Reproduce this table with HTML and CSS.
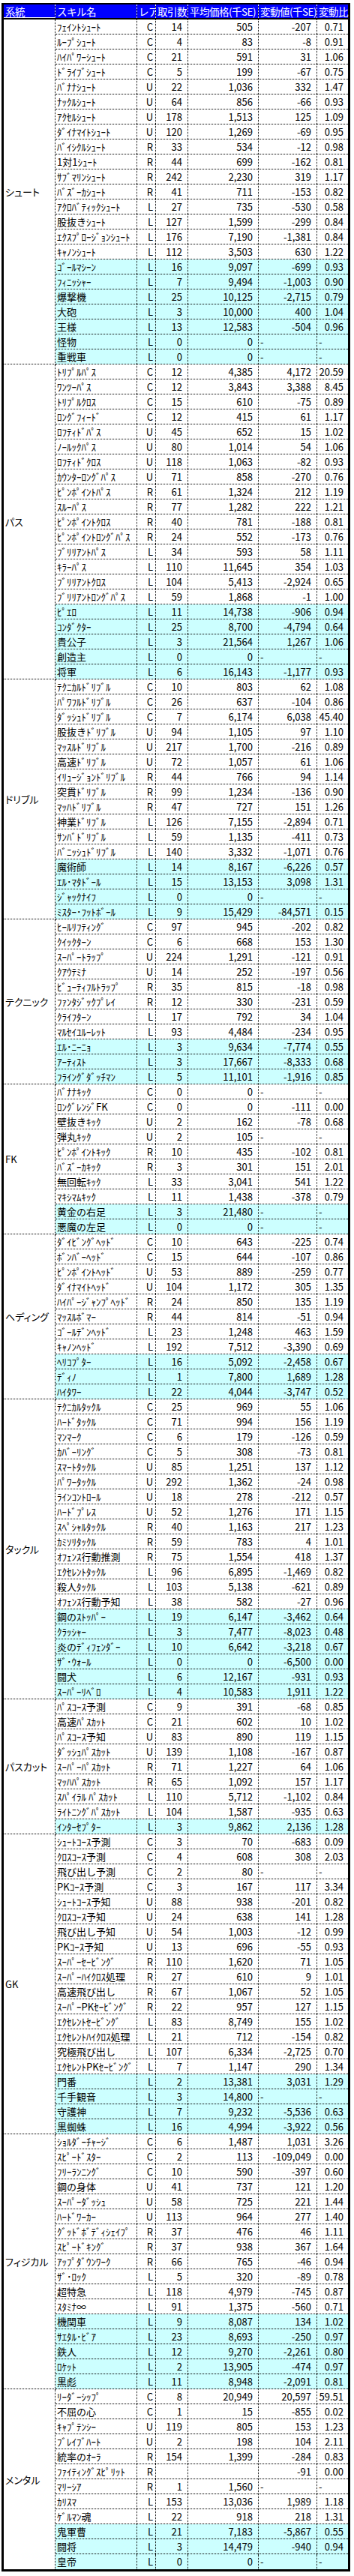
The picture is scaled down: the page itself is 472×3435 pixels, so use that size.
FILE: index.html
```html
<!DOCTYPE html>
<html lang="ja">
<head>
<meta charset="utf-8">
<title>スキル取引相場</title>
<link rel="stylesheet" href="styles.css">
</head>
<body>
<div class="sheet">
  <div class="hdr">
    <div class="sys-h">系統</div>
    <div>スキル名</div>
    <div>レア</div>
    <div>取引数</div>
    <div>平均価格(千SE)</div>
    <div>変動値(千SE)</div>
    <div>変動比</div>
  </div>

  <section class="g">
    <div class="sys">シュート</div>
    <div class="rows">
      <div class="r"><span>ﾌｪｲﾝﾄｼｭｰﾄ</span><span>C</span><span>14</span><span>505</span><span>-207</span><span>0.71</span></div>
      <div class="r"><span>ﾙｰﾌﾟｼｭｰﾄ</span><span>C</span><span>4</span><span>83</span><span>-8</span><span>0.91</span></div>
      <div class="r"><span>ﾊｲﾊﾟﾜｰｼｭｰﾄ</span><span>C</span><span>21</span><span>591</span><span>31</span><span>1.06</span></div>
      <div class="r"><span>ﾄﾞﾗｲﾌﾞｼｭｰﾄ</span><span>C</span><span>5</span><span>199</span><span>-67</span><span>0.75</span></div>
      <div class="r"><span>ﾊﾞﾅﾅｼｭｰﾄ</span><span>U</span><span>22</span><span>1,036</span><span>332</span><span>1.47</span></div>
      <div class="r"><span>ﾅｯｸﾙｼｭｰﾄ</span><span>U</span><span>64</span><span>856</span><span>-66</span><span>0.93</span></div>
      <div class="r"><span>ｱｸｾﾙｼｭｰﾄ</span><span>U</span><span>178</span><span>1,513</span><span>125</span><span>1.09</span></div>
      <div class="r"><span>ﾀﾞｲﾅﾏｲﾄｼｭｰﾄ</span><span>U</span><span>120</span><span>1,269</span><span>-69</span><span>0.95</span></div>
      <div class="r"><span>ﾊﾞｲｼｸﾙｼｭｰﾄ</span><span>R</span><span>33</span><span>534</span><span>-12</span><span>0.98</span></div>
      <div class="r"><span>1対1ｼｭｰﾄ</span><span>R</span><span>44</span><span>699</span><span>-162</span><span>0.81</span></div>
      <div class="r"><span>ｻﾌﾞﾏﾘﾝｼｭｰﾄ</span><span>R</span><span>242</span><span>2,230</span><span>319</span><span>1.17</span></div>
      <div class="r"><span>ﾊﾞｽﾞｰｶｼｭｰﾄ</span><span>R</span><span>41</span><span>711</span><span>-153</span><span>0.82</span></div>
      <div class="r"><span>ｱｸﾛﾊﾞﾃｨｯｸｼｭｰﾄ</span><span>L</span><span>27</span><span>735</span><span>-530</span><span>0.58</span></div>
      <div class="r"><span>股抜きｼｭｰﾄ</span><span>L</span><span>127</span><span>1,599</span><span>-299</span><span>0.84</span></div>
      <div class="r"><span>ｴｸｽﾌﾟﾛｰｼﾞｮﾝｼｭｰﾄ</span><span>L</span><span>176</span><span>7,190</span><span>-1,381</span><span>0.84</span></div>
      <div class="r"><span>ｷｬﾉﾝｼｭｰﾄ</span><span>L</span><span>112</span><span>3,503</span><span>630</span><span>1.22</span></div>
      <div class="r h"><span>ｺﾞｰﾙﾏｼｰﾝ</span><span>L</span><span>16</span><span>9,097</span><span>-699</span><span>0.93</span></div>
      <div class="r h"><span>ﾌｨﾆｯｼｬｰ</span><span>L</span><span>7</span><span>9,494</span><span>-1,003</span><span>0.90</span></div>
      <div class="r h"><span>爆撃機</span><span>L</span><span>25</span><span>10,125</span><span>-2,715</span><span>0.79</span></div>
      <div class="r h"><span>大砲</span><span>L</span><span>3</span><span>10,000</span><span>400</span><span>1.04</span></div>
      <div class="r h"><span>王様</span><span>L</span><span>13</span><span>12,583</span><span>-504</span><span>0.96</span></div>
      <div class="r h"><span>怪物</span><span>L</span><span>0</span><span>0</span><span class="d">-</span><span class="d">-</span></div>
      <div class="r h"><span>重戦車</span><span>L</span><span>0</span><span>0</span><span class="d">-</span><span class="d">-</span></div>
    </div>
  </section>

  <section class="g">
    <div class="sys">パス</div>
    <div class="rows">
      <div class="r"><span>ﾄﾘﾌﾟﾙﾊﾟｽ</span><span>C</span><span>12</span><span>4,385</span><span>4,172</span><span>20.59</span></div>
      <div class="r"><span>ﾜﾝﾂｰﾊﾟｽ</span><span>C</span><span>12</span><span>3,843</span><span>3,388</span><span>8.45</span></div>
      <div class="r"><span>ﾄﾘﾌﾟﾙｸﾛｽ</span><span>C</span><span>15</span><span>610</span><span>-75</span><span>0.89</span></div>
      <div class="r"><span>ﾛﾝｸﾞﾌｨｰﾄﾞ</span><span>C</span><span>12</span><span>415</span><span>61</span><span>1.17</span></div>
      <div class="r"><span>ﾛﾌﾃｨﾄﾞﾊﾟｽ</span><span>U</span><span>45</span><span>652</span><span>15</span><span>1.02</span></div>
      <div class="r"><span>ﾉｰﾙｯｸﾊﾟｽ</span><span>U</span><span>80</span><span>1,014</span><span>54</span><span>1.06</span></div>
      <div class="r"><span>ﾛﾌﾃｨﾄﾞｸﾛｽ</span><span>U</span><span>118</span><span>1,063</span><span>-82</span><span>0.93</span></div>
      <div class="r"><span>ｶｳﾝﾀｰﾛﾝｸﾞﾊﾟｽ</span><span>U</span><span>71</span><span>858</span><span>-270</span><span>0.76</span></div>
      <div class="r"><span>ﾋﾟﾝﾎﾟｲﾝﾄﾊﾟｽ</span><span>R</span><span>61</span><span>1,324</span><span>212</span><span>1.19</span></div>
      <div class="r"><span>ｽﾙｰﾊﾟｽ</span><span>R</span><span>77</span><span>1,282</span><span>222</span><span>1.21</span></div>
      <div class="r"><span>ﾋﾟﾝﾎﾟｲﾝﾄｸﾛｽ</span><span>R</span><span>40</span><span>781</span><span>-188</span><span>0.81</span></div>
      <div class="r"><span>ﾋﾟﾝﾎﾟｲﾝﾄﾛﾝｸﾞﾊﾟｽ</span><span>R</span><span>24</span><span>552</span><span>-173</span><span>0.76</span></div>
      <div class="r"><span>ﾌﾞﾘﾘｱﾝﾄﾊﾟｽ</span><span>L</span><span>34</span><span>593</span><span>58</span><span>1.11</span></div>
      <div class="r"><span>ｷﾗｰﾊﾟｽ</span><span>L</span><span>110</span><span>11,645</span><span>354</span><span>1.03</span></div>
      <div class="r"><span>ﾌﾞﾘﾘｱﾝﾄｸﾛｽ</span><span>L</span><span>104</span><span>5,413</span><span>-2,924</span><span>0.65</span></div>
      <div class="r"><span>ﾌﾞﾘﾘｱﾝﾄﾛﾝｸﾞﾊﾟｽ</span><span>L</span><span>59</span><span>1,868</span><span>-1</span><span>1.00</span></div>
      <div class="r h"><span>ﾋﾟｴﾛ</span><span>L</span><span>11</span><span>14,738</span><span>-906</span><span>0.94</span></div>
      <div class="r h"><span>ｺﾝﾀﾞｸﾀｰ</span><span>L</span><span>25</span><span>8,700</span><span>-4,794</span><span>0.64</span></div>
      <div class="r h"><span>貴公子</span><span>L</span><span>3</span><span>21,564</span><span>1,267</span><span>1.06</span></div>
      <div class="r h"><span>創造主</span><span>L</span><span>0</span><span>0</span><span class="d">-</span><span class="d">-</span></div>
      <div class="r h"><span>将軍</span><span>L</span><span>6</span><span>16,143</span><span>-1,177</span><span>0.93</span></div>
    </div>
  </section>

  <section class="g">
    <div class="sys">ドリブル</div>
    <div class="rows">
      <div class="r"><span>ﾃｸﾆｶﾙﾄﾞﾘﾌﾞﾙ</span><span>C</span><span>10</span><span>803</span><span>62</span><span>1.08</span></div>
      <div class="r"><span>ﾊﾟﾜﾌﾙﾄﾞﾘﾌﾞﾙ</span><span>C</span><span>26</span><span>637</span><span>-104</span><span>0.86</span></div>
      <div class="r"><span>ﾀﾞｯｼｭﾄﾞﾘﾌﾞﾙ</span><span>C</span><span>7</span><span>6,174</span><span>6,038</span><span>45.40</span></div>
      <div class="r"><span>股抜きﾄﾞﾘﾌﾞﾙ</span><span>U</span><span>94</span><span>1,105</span><span>97</span><span>1.10</span></div>
      <div class="r"><span>ﾏｯｽﾙﾄﾞﾘﾌﾞﾙ</span><span>U</span><span>217</span><span>1,700</span><span>-216</span><span>0.89</span></div>
      <div class="r"><span>高速ﾄﾞﾘﾌﾞﾙ</span><span>U</span><span>72</span><span>1,057</span><span>61</span><span>1.06</span></div>
      <div class="r"><span>ｲﾘｭｰｼﾞｮﾝﾄﾞﾘﾌﾞﾙ</span><span>R</span><span>44</span><span>766</span><span>94</span><span>1.14</span></div>
      <div class="r"><span>突貫ﾄﾞﾘﾌﾞﾙ</span><span>R</span><span>99</span><span>1,234</span><span>-136</span><span>0.90</span></div>
      <div class="r"><span>ﾏｯﾊﾄﾞﾘﾌﾞﾙ</span><span>R</span><span>47</span><span>727</span><span>151</span><span>1.26</span></div>
      <div class="r"><span>神業ﾄﾞﾘﾌﾞﾙ</span><span>L</span><span>126</span><span>7,155</span><span>-2,894</span><span>0.71</span></div>
      <div class="r"><span>ｻﾝﾊﾞﾄﾞﾘﾌﾞﾙ</span><span>L</span><span>59</span><span>1,135</span><span>-411</span><span>0.73</span></div>
      <div class="r"><span>ﾊﾞﾆｯｼｭﾄﾞﾘﾌﾞﾙ</span><span>L</span><span>140</span><span>3,332</span><span>-1,071</span><span>0.76</span></div>
      <div class="r h"><span>魔術師</span><span>L</span><span>14</span><span>8,167</span><span>-6,226</span><span>0.57</span></div>
      <div class="r h"><span>ｴﾙ･ﾏﾀﾄﾞｰﾙ</span><span>L</span><span>15</span><span>13,153</span><span>3,098</span><span>1.31</span></div>
      <div class="r h"><span>ｼﾞｬｯｸﾅｲﾌ</span><span>L</span><span>0</span><span>0</span><span class="d">-</span><span class="d">-</span></div>
      <div class="r h"><span>ﾐｽﾀｰ･ﾌｯﾄﾎﾞｰﾙ</span><span>L</span><span>9</span><span>15,429</span><span>-84,571</span><span>0.15</span></div>
    </div>
  </section>

  <section class="g">
    <div class="sys">テクニック</div>
    <div class="rows">
      <div class="r"><span>ﾋｰﾙﾘﾌﾃｨﾝｸﾞ</span><span>C</span><span>97</span><span>945</span><span>-202</span><span>0.82</span></div>
      <div class="r"><span>ｸｲｯｸﾀｰﾝ</span><span>C</span><span>6</span><span>668</span><span>153</span><span>1.30</span></div>
      <div class="r"><span>ｽｰﾊﾟｰﾄﾗｯﾌﾟ</span><span>U</span><span>224</span><span>1,291</span><span>-121</span><span>0.91</span></div>
      <div class="r"><span>ｸｱｳﾃﾐﾅ</span><span>U</span><span>14</span><span>252</span><span>-197</span><span>0.56</span></div>
      <div class="r"><span>ﾋﾞｭｰﾃｨﾌﾙﾄﾗｯﾌﾟ</span><span>R</span><span>35</span><span>815</span><span>-18</span><span>0.98</span></div>
      <div class="r"><span>ﾌｧﾝﾀｼﾞｯｸﾌﾟﾚｲ</span><span>R</span><span>12</span><span>330</span><span>-231</span><span>0.59</span></div>
      <div class="r"><span>ｸﾗｲﾌﾀｰﾝ</span><span>L</span><span>17</span><span>792</span><span>34</span><span>1.04</span></div>
      <div class="r"><span>ﾏﾙｾｲﾕﾙｰﾚｯﾄ</span><span>L</span><span>93</span><span>4,484</span><span>-234</span><span>0.95</span></div>
      <div class="r h"><span>ｴﾙ･ﾆｰﾆｮ</span><span>L</span><span>3</span><span>9,634</span><span>-7,774</span><span>0.55</span></div>
      <div class="r h"><span>ｱｰﾃｨｽﾄ</span><span>L</span><span>3</span><span>17,667</span><span>-8,333</span><span>0.68</span></div>
      <div class="r h"><span>ﾌﾗｲﾝｸﾞﾀﾞｯﾁﾏﾝ</span><span>L</span><span>5</span><span>11,101</span><span>-1,916</span><span>0.85</span></div>
    </div>
  </section>

  <section class="g">
    <div class="sys">FK</div>
    <div class="rows">
      <div class="r"><span>ﾊﾞﾅﾅｷｯｸ</span><span>C</span><span>0</span><span>0</span><span class="d">-</span><span class="d">-</span></div>
      <div class="r"><span>ﾛﾝｸﾞﾚﾝｼﾞFK</span><span>C</span><span>0</span><span>0</span><span>-111</span><span>0.00</span></div>
      <div class="r"><span>壁抜きｷｯｸ</span><span>U</span><span>2</span><span>162</span><span>-78</span><span>0.68</span></div>
      <div class="r"><span>弾丸ｷｯｸ</span><span>U</span><span>2</span><span>105</span><span class="d">-</span><span class="d">-</span></div>
      <div class="r"><span>ﾋﾟﾝﾎﾟｲﾝﾄｷｯｸ</span><span>R</span><span>10</span><span>435</span><span>-102</span><span>0.81</span></div>
      <div class="r"><span>ﾊﾞｽﾞｰｶｷｯｸ</span><span>R</span><span>3</span><span>301</span><span>151</span><span>2.01</span></div>
      <div class="r"><span>無回転ｷｯｸ</span><span>L</span><span>33</span><span>3,041</span><span>541</span><span>1.22</span></div>
      <div class="r"><span>ﾏｷｼﾏﾑｷｯｸ</span><span>L</span><span>11</span><span>1,438</span><span>-378</span><span>0.79</span></div>
      <div class="r h"><span>黄金の右足</span><span>L</span><span>3</span><span>21,480</span><span class="d">-</span><span class="d">-</span></div>
      <div class="r h"><span>悪魔の左足</span><span>L</span><span>0</span><span>0</span><span class="d">-</span><span class="d">-</span></div>
    </div>
  </section>

  <section class="g">
    <div class="sys">ヘディング</div>
    <div class="rows">
      <div class="r"><span>ﾀﾞｲﾋﾞﾝｸﾞﾍｯﾄﾞ</span><span>C</span><span>10</span><span>643</span><span>-225</span><span>0.74</span></div>
      <div class="r"><span>ﾎﾞﾝﾊﾞｰﾍｯﾄﾞ</span><span>C</span><span>15</span><span>644</span><span>-107</span><span>0.86</span></div>
      <div class="r"><span>ﾋﾟﾝﾎﾟｲﾝﾄﾍｯﾄﾞ</span><span>U</span><span>53</span><span>889</span><span>-259</span><span>0.77</span></div>
      <div class="r"><span>ﾀﾞｲﾅﾏｲﾄﾍｯﾄﾞ</span><span>U</span><span>104</span><span>1,172</span><span>305</span><span>1.35</span></div>
      <div class="r"><span>ﾊｲﾊﾟｰｼﾞｬﾝﾌﾟﾍｯﾄﾞ</span><span>R</span><span>24</span><span>850</span><span>135</span><span>1.19</span></div>
      <div class="r"><span>ﾏｯｽﾙﾎﾞﾏｰ</span><span>R</span><span>44</span><span>814</span><span>-51</span><span>0.94</span></div>
      <div class="r"><span>ｺﾞｰﾙﾃﾞﾝﾍｯﾄﾞ</span><span>L</span><span>23</span><span>1,248</span><span>463</span><span>1.59</span></div>
      <div class="r"><span>ｷｬﾉﾝﾍｯﾄﾞ</span><span>L</span><span>192</span><span>7,512</span><span>-3,390</span><span>0.69</span></div>
      <div class="r h"><span>ﾍﾘｺﾌﾟﾀｰ</span><span>L</span><span>16</span><span>5,092</span><span>-2,458</span><span>0.67</span></div>
      <div class="r h"><span>ﾃﾞｨﾉ</span><span>L</span><span>1</span><span>7,800</span><span>1,689</span><span>1.28</span></div>
      <div class="r h"><span>ﾊｲﾀﾜｰ</span><span>L</span><span>22</span><span>4,044</span><span>-3,747</span><span>0.52</span></div>
    </div>
  </section>

  <section class="g">
    <div class="sys">タックル</div>
    <div class="rows">
      <div class="r"><span>ﾃｸﾆｶﾙﾀｯｸﾙ</span><span>C</span><span>25</span><span>969</span><span>55</span><span>1.06</span></div>
      <div class="r"><span>ﾊｰﾄﾞﾀｯｸﾙ</span><span>C</span><span>71</span><span>994</span><span>156</span><span>1.19</span></div>
      <div class="r"><span>ﾏﾝﾏｰｸ</span><span>C</span><span>6</span><span>179</span><span>-126</span><span>0.59</span></div>
      <div class="r"><span>ｶﾊﾞｰﾘﾝｸﾞ</span><span>C</span><span>5</span><span>308</span><span>-73</span><span>0.81</span></div>
      <div class="r"><span>ｽﾏｰﾄﾀｯｸﾙ</span><span>U</span><span>85</span><span>1,251</span><span>137</span><span>1.12</span></div>
      <div class="r"><span>ﾊﾟﾜｰﾀｯｸﾙ</span><span>U</span><span>292</span><span>1,362</span><span>-24</span><span>0.98</span></div>
      <div class="r"><span>ﾗｲﾝｺﾝﾄﾛｰﾙ</span><span>U</span><span>18</span><span>278</span><span>-212</span><span>0.57</span></div>
      <div class="r"><span>ﾊｰﾄﾞﾌﾟﾚｽ</span><span>U</span><span>52</span><span>1,276</span><span>171</span><span>1.15</span></div>
      <div class="r"><span>ｽﾍﾟｼｬﾙﾀｯｸﾙ</span><span>R</span><span>40</span><span>1,163</span><span>217</span><span>1.23</span></div>
      <div class="r"><span>ｶﾐｿﾘﾀｯｸﾙ</span><span>R</span><span>59</span><span>783</span><span>4</span><span>1.01</span></div>
      <div class="r"><span>ｵﾌｪﾝｽ行動推測</span><span>R</span><span>75</span><span>1,554</span><span>418</span><span>1.37</span></div>
      <div class="r"><span>ｴｸｾﾚﾝﾄﾀｯｸﾙ</span><span>L</span><span>96</span><span>6,895</span><span>-1,469</span><span>0.82</span></div>
      <div class="r"><span>殺人ﾀｯｸﾙ</span><span>L</span><span>103</span><span>5,138</span><span>-621</span><span>0.89</span></div>
      <div class="r"><span>ｵﾌｪﾝｽ行動予知</span><span>L</span><span>38</span><span>582</span><span>-27</span><span>0.96</span></div>
      <div class="r h"><span>鋼のｽﾄｯﾊﾟｰ</span><span>L</span><span>19</span><span>6,147</span><span>-3,462</span><span>0.64</span></div>
      <div class="r h"><span>ｸﾗｯｼｬｰ</span><span>L</span><span>3</span><span>7,477</span><span>-8,023</span><span>0.48</span></div>
      <div class="r h"><span>炎のﾃﾞｨﾌｪﾝﾀﾞｰ</span><span>L</span><span>10</span><span>6,642</span><span>-3,218</span><span>0.67</span></div>
      <div class="r h"><span>ｻﾞ･ｳｫｰﾙ</span><span>L</span><span>0</span><span>0</span><span>-6,500</span><span>0.00</span></div>
      <div class="r h"><span>闘犬</span><span>L</span><span>6</span><span>12,167</span><span>-931</span><span>0.93</span></div>
      <div class="r h"><span>ｽｰﾊﾟｰﾘﾍﾞﾛ</span><span>L</span><span>4</span><span>10,583</span><span>1,911</span><span>1.22</span></div>
    </div>
  </section>

  <section class="g">
    <div class="sys">パスカット</div>
    <div class="rows">
      <div class="r"><span>ﾊﾟｽｺｰｽ予測</span><span>C</span><span>9</span><span>391</span><span>-68</span><span>0.85</span></div>
      <div class="r"><span>高速ﾊﾟｽｶｯﾄ</span><span>C</span><span>21</span><span>602</span><span>10</span><span>1.02</span></div>
      <div class="r"><span>ﾊﾟｽｺｰｽ予知</span><span>U</span><span>83</span><span>890</span><span>119</span><span>1.15</span></div>
      <div class="r"><span>ﾀﾞｯｼｭﾊﾟｽｶｯﾄ</span><span>U</span><span>139</span><span>1,108</span><span>-167</span><span>0.87</span></div>
      <div class="r"><span>ｽｰﾊﾟｰﾊﾟｽｶｯﾄ</span><span>R</span><span>71</span><span>1,227</span><span>64</span><span>1.06</span></div>
      <div class="r"><span>ﾏｯﾊﾊﾟｽｶｯﾄ</span><span>R</span><span>65</span><span>1,092</span><span>157</span><span>1.17</span></div>
      <div class="r"><span>ｽﾊﾟｲﾗﾙ ﾊﾟｽｶｯﾄ</span><span>L</span><span>110</span><span>5,712</span><span>-1,102</span><span>0.84</span></div>
      <div class="r"><span>ﾗｲﾄﾆﾝｸﾞﾊﾟｽｶｯﾄ</span><span>L</span><span>104</span><span>1,587</span><span>-935</span><span>0.63</span></div>
      <div class="r h"><span>ｲﾝﾀｰｾﾌﾟﾀｰ</span><span>L</span><span>3</span><span>9,862</span><span>2,136</span><span>1.28</span></div>
    </div>
  </section>

  <section class="g">
    <div class="sys">GK</div>
    <div class="rows">
      <div class="r"><span>ｼｭｰﾄｺｰｽ予測</span><span>C</span><span>3</span><span>70</span><span>-683</span><span>0.09</span></div>
      <div class="r"><span>ｸﾛｽｺｰｽ予測</span><span>C</span><span>4</span><span>608</span><span>308</span><span>2.03</span></div>
      <div class="r"><span>飛び出し予測</span><span>C</span><span>2</span><span>80</span><span class="d">-</span><span class="d">-</span></div>
      <div class="r"><span>PKｺｰｽ予測</span><span>C</span><span>3</span><span>167</span><span>117</span><span>3.34</span></div>
      <div class="r"><span>ｼｭｰﾄｺｰｽ予知</span><span>U</span><span>88</span><span>938</span><span>-201</span><span>0.82</span></div>
      <div class="r"><span>ｸﾛｽｺｰｽ予知</span><span>U</span><span>24</span><span>638</span><span>141</span><span>1.28</span></div>
      <div class="r"><span>飛び出し予知</span><span>U</span><span>54</span><span>1,003</span><span>-12</span><span>0.99</span></div>
      <div class="r"><span>PKｺｰｽ予知</span><span>U</span><span>13</span><span>696</span><span>-55</span><span>0.93</span></div>
      <div class="r"><span>ｽｰﾊﾟｰｾｰﾋﾞﾝｸﾞ</span><span>R</span><span>110</span><span>1,620</span><span>71</span><span>1.05</span></div>
      <div class="r"><span>ｽｰﾊﾟｰﾊｲｸﾛｽ処理</span><span>R</span><span>27</span><span>610</span><span>9</span><span>1.01</span></div>
      <div class="r"><span>高速飛び出し</span><span>R</span><span>67</span><span>1,067</span><span>52</span><span>1.05</span></div>
      <div class="r"><span>ｽｰﾊﾟｰPKｾｰﾋﾞﾝｸﾞ</span><span>R</span><span>22</span><span>957</span><span>127</span><span>1.15</span></div>
      <div class="r"><span>ｴｸｾﾚﾝﾄｾｰﾋﾞﾝｸﾞ</span><span>L</span><span>83</span><span>8,749</span><span>155</span><span>1.02</span></div>
      <div class="r"><span>ｴｸｾﾚﾝﾄﾊｲｸﾛｽ処理</span><span>L</span><span>21</span><span>712</span><span>-154</span><span>0.82</span></div>
      <div class="r"><span>究極飛び出し</span><span>L</span><span>107</span><span>6,334</span><span>-2,725</span><span>0.70</span></div>
      <div class="r"><span>ｴｸｾﾚﾝﾄPKｾｰﾋﾞﾝｸﾞ</span><span>L</span><span>7</span><span>1,147</span><span>290</span><span>1.34</span></div>
      <div class="r h"><span>門番</span><span>L</span><span>2</span><span>13,381</span><span>3,031</span><span>1.29</span></div>
      <div class="r h"><span>千手観音</span><span>L</span><span>3</span><span>14,800</span><span class="d">-</span><span class="d">-</span></div>
      <div class="r h"><span>守護神</span><span>L</span><span>7</span><span>9,232</span><span>-5,536</span><span>0.63</span></div>
      <div class="r h"><span>黒蜘蛛</span><span>L</span><span>16</span><span>4,994</span><span>-3,922</span><span>0.56</span></div>
    </div>
  </section>

  <section class="g">
    <div class="sys">フィジカル</div>
    <div class="rows">
      <div class="r"><span>ｼｮﾙﾀﾞｰﾁｬｰｼﾞ</span><span>C</span><span>6</span><span>1,487</span><span>1,031</span><span>3.26</span></div>
      <div class="r"><span>ｽﾋﾟｰﾄﾞｽﾀｰ</span><span>C</span><span>2</span><span>113</span><span>-109,049</span><span>0.00</span></div>
      <div class="r"><span>ﾌﾘｰﾗﾝﾆﾝｸﾞ</span><span>C</span><span>10</span><span>590</span><span>-397</span><span>0.60</span></div>
      <div class="r"><span>鋼の身体</span><span>U</span><span>41</span><span>737</span><span>121</span><span>1.20</span></div>
      <div class="r"><span>ｽｰﾊﾟｰﾀﾞｯｼｭ</span><span>U</span><span>58</span><span>725</span><span>221</span><span>1.44</span></div>
      <div class="r"><span>ﾊｰﾄﾞﾜｰｶｰ</span><span>U</span><span>113</span><span>964</span><span>277</span><span>1.40</span></div>
      <div class="r"><span>ｸﾞｯﾄﾞﾎﾞﾃﾞｨｼｪｲﾌﾟ</span><span>R</span><span>37</span><span>476</span><span>46</span><span>1.11</span></div>
      <div class="r"><span>ｽﾋﾟｰﾄﾞｷﾝｸﾞ</span><span>R</span><span>37</span><span>938</span><span>367</span><span>1.64</span></div>
      <div class="r"><span>ｱｯﾌﾟﾀﾞｳﾝﾜｰｸ</span><span>R</span><span>66</span><span>765</span><span>-46</span><span>0.94</span></div>
      <div class="r"><span>ｻﾞ･ﾛｯｸ</span><span>L</span><span>5</span><span>320</span><span>-89</span><span>0.78</span></div>
      <div class="r"><span>超特急</span><span>L</span><span>118</span><span>4,979</span><span>-745</span><span>0.87</span></div>
      <div class="r"><span>ｽﾀﾐﾅ∞</span><span>L</span><span>91</span><span>1,375</span><span>-560</span><span>0.71</span></div>
      <div class="r h"><span>機関車</span><span>L</span><span>9</span><span>8,087</span><span>134</span><span>1.02</span></div>
      <div class="r h"><span>ｻｴﾀﾙ･ﾋﾞｱ</span><span>L</span><span>23</span><span>8,693</span><span>-250</span><span>0.97</span></div>
      <div class="r h"><span>鉄人</span><span>L</span><span>12</span><span>9,270</span><span>-2,261</span><span>0.80</span></div>
      <div class="r h"><span>ﾛｹｯﾄ</span><span>L</span><span>2</span><span>13,905</span><span>-474</span><span>0.97</span></div>
      <div class="r h"><span>黒彪</span><span>L</span><span>11</span><span>8,948</span><span>-2,091</span><span>0.81</span></div>
    </div>
  </section>

  <section class="g">
    <div class="sys">メンタル</div>
    <div class="rows">
      <div class="r"><span>ﾘｰﾀﾞｰｼｯﾌﾟ</span><span>C</span><span>8</span><span>20,949</span><span>20,597</span><span>59.51</span></div>
      <div class="r"><span>不屈の心</span><span>C</span><span>1</span><span>15</span><span>-855</span><span>0.02</span></div>
      <div class="r"><span>ｷｬﾌﾟﾃﾝｼｰ</span><span>U</span><span>119</span><span>805</span><span>153</span><span>1.23</span></div>
      <div class="r"><span>ﾌﾞﾚｲﾌﾞﾊｰﾄ</span><span>U</span><span>2</span><span>198</span><span>104</span><span>2.11</span></div>
      <div class="r"><span>統率のｵｰﾗ</span><span>R</span><span>154</span><span>1,399</span><span>-284</span><span>0.83</span></div>
      <div class="r"><span>ﾌｧｲﾃｨﾝｸﾞｽﾋﾟﾘｯﾄ</span><span>R</span><span></span><span></span><span>-91</span><span>0.00</span></div>
      <div class="r"><span>ﾏﾘｰｼｱ</span><span>R</span><span>1</span><span>1,560</span><span class="d">-</span><span class="d">-</span></div>
      <div class="r"><span>ｶﾘｽﾏ</span><span>L</span><span>153</span><span>13,036</span><span>1,989</span><span>1.18</span></div>
      <div class="r"><span>ｹﾞﾙﾏﾝ魂</span><span>L</span><span>22</span><span>918</span><span>218</span><span>1.31</span></div>
      <div class="r h"><span>鬼軍曹</span><span>L</span><span>21</span><span>7,183</span><span>-5,867</span><span>0.55</span></div>
      <div class="r h"><span>闘将</span><span>L</span><span>3</span><span>14,479</span><span>-940</span><span>0.94</span></div>
      <div class="r h"><span>皇帝</span><span>L</span><span>0</span><span>0</span><span class="d">-</span><span class="d">-</span></div>
    </div>
  </section>
</div>
</body>
</html>
```

FILE: styles.css
```css
* {
  box-sizing: border-box;
}

html, body {
  margin: 0;
  padding: 0;
  background: #fff;
}

body {
  padding: 4px 0 0 2px;
  font-family: "Noto Sans CJK JP", "Noto Sans", sans-serif;
  font-size: 13px;
  color: #000;
}

.sheet {
  width: 465px;
  border-style: solid;
  border-color: #000;
  border-width: 2px 3px 3px 3px;
}

/* header */
.hdr {
  display: grid;
  grid-template-columns: 69px 109px 25px 43px 94px 78px 41px;
  background: #000;
  border-bottom: 2px solid #000;
}

.hdr > div {
  height: 18px;
  line-height: 18px;
  padding-left: 2px;
  background: #0000ff;
  background-clip: padding-box;
  color: #fff;
  font-size: 13.5px;
  letter-spacing: -0.5px;
  white-space: nowrap;
  border-right: 1px dotted #fff;
}

.hdr > div:last-child {
  border-right: 0;
}

.hdr > .sys-h {
  box-shadow: inset 0 -1px 0 #fff;
}

/* groups */
.g {
  display: flex;
}

.sys {
  width: 69px;
  flex: none;
  display: flex;
  align-items: center;
  padding-left: 2px;
  border-right: 1px dotted #000;
  border-bottom: 1px dotted #000;
  font-feature-settings: "palt";
  white-space: nowrap;
}

.rows {
  flex: 1;
  display: flex;
  flex-direction: column;
}

.r {
  display: grid;
  grid-template-columns: 109px 25px 43px 94px 78px 41px;
  height: 20px;
  border-bottom: 1px dotted #000;
  line-height: 19px;
}

.r.h {
  background: #ccffff;
}

.r > span {
  text-align: right;
  padding-right: 7px;
  border-right: 1px dotted #000;
  white-space: nowrap;
}

.r > span:first-child {
  text-align: left;
  padding: 0 0 0 2px;
}

.r > span:nth-child(2) {
  padding-right: 3px;
}

.r > span:last-child {
  border-right: 0;
  padding-right: 6px;
}

.r > span.d {
  text-align: left;
  padding: 0 0 0 2px;
}

.g:last-child .sys,
.g:last-child .r:last-child {
  border-bottom: 0;
}
```
